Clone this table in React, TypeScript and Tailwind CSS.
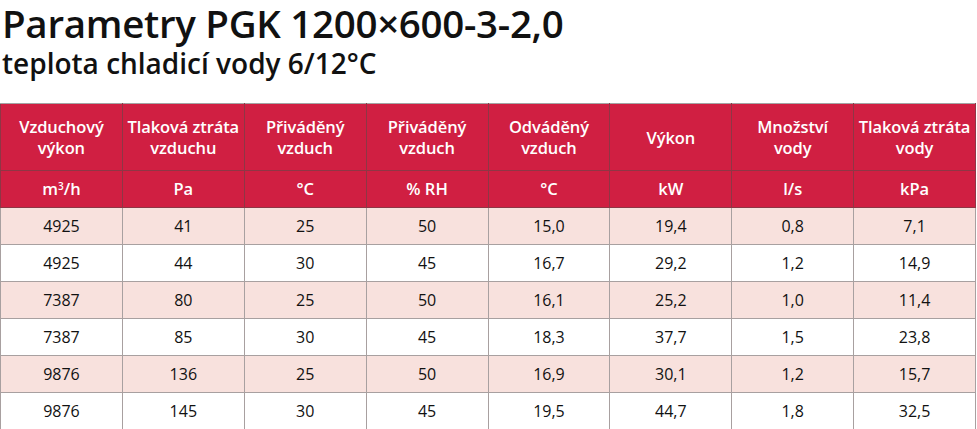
const heads = [
  ['Vzduchový', 'výkon'],
  ['Tlaková ztráta', 'vzduchu'],
  ['Přiváděný', 'vzduch'],
  ['Přiváděný', 'vzduch'],
  ['Odváděný', 'vzduch'],
  ['Výkon'],
  ['Množství', 'vody'],
  ['Tlaková ztráta', 'vody'],
];

const units = ['m3/h', 'Pa', '°C', '% RH', '°C', 'kW', 'l/s', 'kPa'];

const rows = [
  ['4925', '41', '25', '50', '15,0', '19,4', '0,8', '7,1'],
  ['4925', '44', '30', '45', '16,7', '29,2', '1,2', '14,9'],
  ['7387', '80', '25', '50', '16,1', '25,2', '1,0', '11,4'],
  ['7387', '85', '30', '45', '18,3', '37,7', '1,5', '23,8'],
  ['9876', '136', '25', '50', '16,9', '30,1', '1,2', '15,7'],
  ['9876', '145', '30', '45', '19,5', '44,7', '1,8', '32,5'],
];

export default function App() {
  return (
    <div className="w-[977px] h-[429px] bg-white overflow-hidden font-['Open_Sans',sans-serif]">
      <h1 className="pl-[2px] pt-[1px] text-[38.5px] leading-[44px] font-semibold text-[#111] tracking-[-0.3px] whitespace-nowrap">
        Parametry PGK 1200×600-3-2,0
      </h1>
      <h2 className="pl-[2px] mt-[1px] text-[28px] leading-[34px] font-semibold text-[#111] tracking-[0px] whitespace-nowrap">
        teplota chladicí vody 6/12°C
      </h2>
      <table className="mt-[23px] w-[976px] table-fixed border-collapse text-center">
        <thead>
          <tr className="bg-[#d01f42] text-white h-[67px]">
            {heads.map((h, i) => (
              <th key={i} className="border border-[#8e3645] border-t-[#a3a3a3] font-semibold text-[16.5px] leading-[21px] tracking-[-0.1px] align-middle">
                {h.map((l, j) => (
                  <div key={j}>{l}</div>
                ))}
              </th>
            ))}
          </tr>
          <tr className="bg-[#d01f42] text-white h-[37px]">
            {units.map((u, i) => (
              <th key={i} className="border border-[#8e3645] font-semibold text-[16.5px] leading-[20px]">
                {u === 'm3/h' ? (
                  <span>m<sup className="text-[10px]">3</sup>/h</span>
                ) : (
                  u
                )}
              </th>
            ))}
          </tr>
        </thead>
        <tbody>
          {rows.map((r, i) => (
            <tr key={i} className={`h-[37px] ${i % 2 === 0 ? 'bg-[#f8e1dd]' : 'bg-white'}`}>
              {r.map((c, j) => (
                <td key={j} className="border border-[#a8a0a0] text-[16px] text-[#111]">
                  {c}
                </td>
              ))}
            </tr>
          ))}
        </tbody>
      </table>
    </div>
  );
}
